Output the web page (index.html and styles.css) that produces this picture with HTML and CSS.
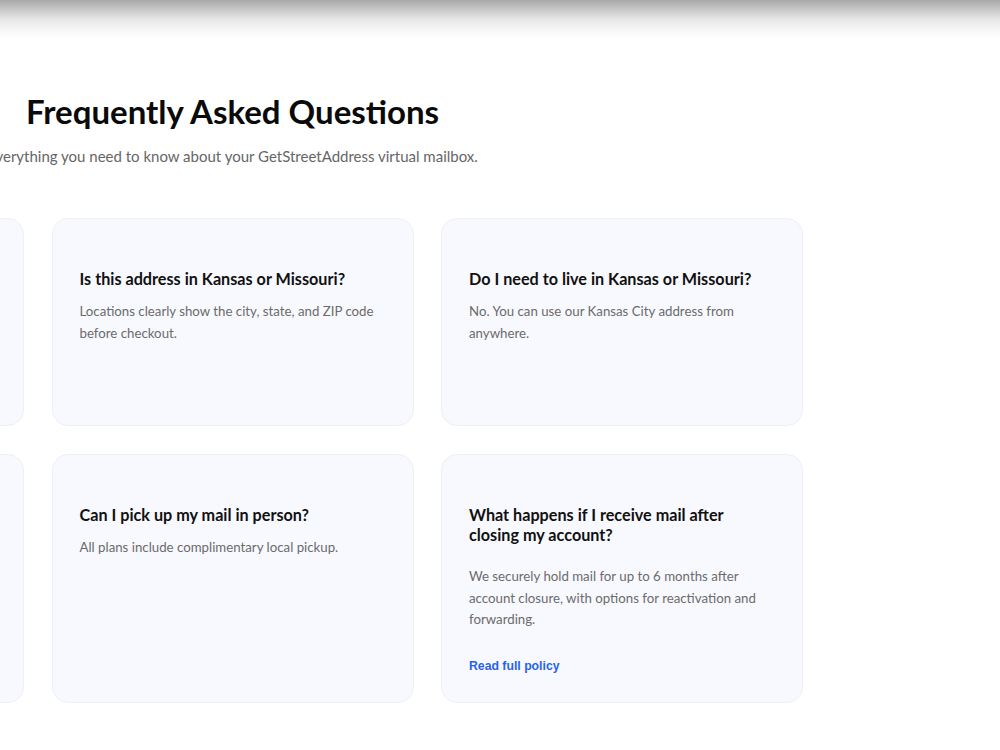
FILE: index.html
```html
<!DOCTYPE html>
<html lang="en">
<head>
    <meta charset="UTF-8">
    <meta name="viewport" content="width=device-width, initial-scale=1.0">
    <title>FAQ - GetStreetAddress</title>
    <link rel="stylesheet" href="styles.css">
</head>
<body>
    <div class="top-shade"></div>

    <section class="faq">
        <h1>Frequently Asked Questions</h1>
        <p class="subtitle">Everything you need to know about your GetStreetAddress virtual mailbox.</p>

        <div class="faq-grid">
            <div class="faq-card">
                <h3>What is a virtual mailbox?</h3>
                <p>A real street address where we receive, scan and store your mail.</p>
            </div>
            <div class="faq-card">
                <h3>Is this address in Kansas or Missouri?</h3>
                <p>Locations clearly show the city, state, and ZIP code before checkout.</p>
            </div>
            <div class="faq-card">
                <h3>Do I need to live in Kansas or Missouri?</h3>
                <p>No. You can use our Kansas City address from anywhere.</p>
            </div>

            <div class="faq-card">
                <h3>Can I use it for my business?</h3>
                <p>Yes. The address works for business registration and banking.</p>
            </div>
            <div class="faq-card">
                <h3>Can I pick up my mail in person?</h3>
                <p>All plans include complimentary local pickup.</p>
            </div>
            <div class="faq-card">
                <h3>What happens if I receive mail after closing my account?</h3>
                <p class="spaced">We securely hold mail for up to 6 months after account closure, with options for reactivation and forwarding.</p>
                <a class="policy-link" href="#">Read full policy</a>
            </div>
        </div>
    </section>
</body>
</html>
```

FILE: styles.css
```css
* {
    margin: 0;
    padding: 0;
    box-sizing: border-box;
}

body {
    font-family: 'Lato', 'Liberation Sans', sans-serif;
    background: #ffffff;
    color: #111;
    overflow: hidden;
}

.top-shade {
    height: 40px;
    background: linear-gradient(to bottom,
        rgba(0,0,0,0.34) 0px,
        rgba(0,0,0,0.21) 10px,
        rgba(0,0,0,0.09) 20px,
        rgba(0,0,0,0.03) 30px,
        rgba(0,0,0,0) 40px);
}

.faq {
    width: 1141px;
    margin-left: -338px;
    padding-top: 52px;
}

.faq h1 {
    text-align: center;
    font-size: 33px;
    font-weight: 700;
    line-height: 1.2;
    color: #0a0a0a;
    margin-bottom: 13px;
}

.subtitle {
    text-align: center;
    font-size: 15px;
    line-height: 22.5px;
    color: #666;
    margin-bottom: 51px;
}

.faq-grid {
    display: grid;
    grid-template-columns: repeat(3, 362px);
    gap: 28px 27.5px;
}

.faq-card {
    min-height: 208px;
    background: #f8f9fe;
    border: 1px solid #eef0f7;
    border-radius: 16px;
    padding: 50px 26px 28px 27px;
}

.faq-card h3 {
    font-size: 16.2px;
    font-weight: 700;
    line-height: 20px;
    color: #111;
}

.faq-card p {
    font-size: 13.25px;
    line-height: 21.5px;
    color: #6b6b6b;
    margin-top: 12px;
}

.faq-card p.spaced {
    margin-top: 21px;
}

.policy-link {
    display: block;
    margin-top: 28px;
    font-family: 'Liberation Sans', Arial, sans-serif;
    font-size: 12.25px;
    font-weight: 700;
    line-height: 15px;
    color: #2563eb;
    text-decoration: none;
}
```
